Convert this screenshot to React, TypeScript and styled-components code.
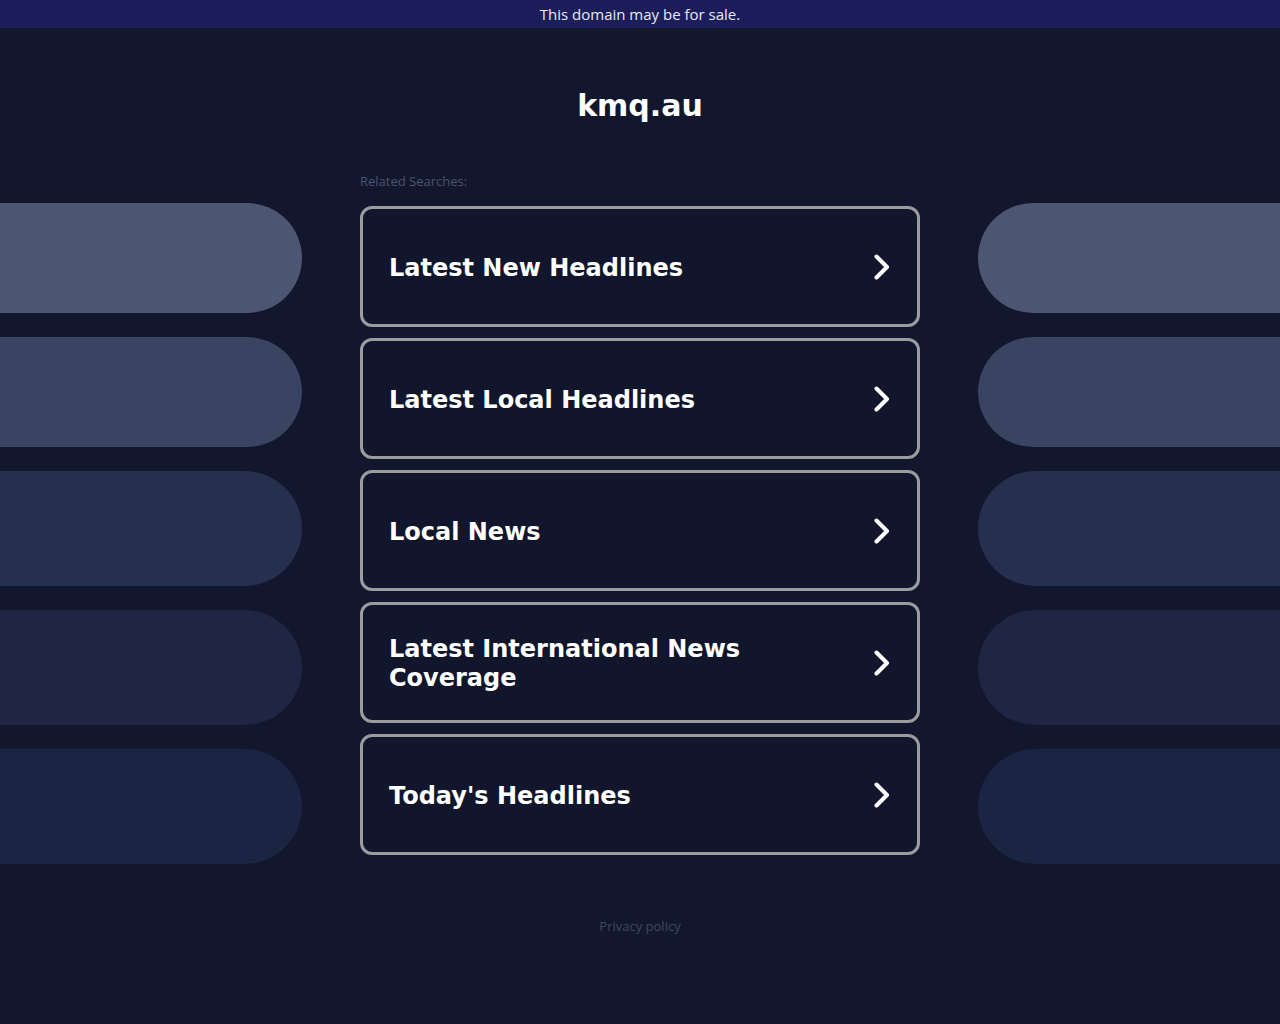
import React from 'react';
import styled, { createGlobalStyle } from 'styled-components';

const GlobalStyle = createGlobalStyle`
  html, body {
    margin: 0;
    padding: 0;
    background: #12172d;
  }
  body {
    font-family: 'Open Sans', 'Liberation Sans', sans-serif;
  }
`;

const Page = styled.div`
  width: 1280px;
  min-height: 1024px;
  display: flex;
  flex-direction: column;
  background: #12172d;
  overflow: hidden;
`;

const Banner = styled.div`
  height: 28px;
  display: flex;
  align-items: center;
  justify-content: center;
  background: #1b1e5b;
  color: #e8e9f2;
  font-size: 15px;
`;

const Title = styled.h1`
  margin: 60px 0 0;
  text-align: center;
  font-family: 'DejaVu Sans', sans-serif;
  font-weight: 700;
  font-size: 30px;
  line-height: 36px;
  color: #ffffff;
`;

const Layout = styled.div`
  margin-top: 48px;
  display: grid;
  grid-template-columns: 302px 560px 302px;
  column-gap: 58px;
  align-items: start;
`;

const PillColumn = styled.div`
  padding-top: 31px;
  display: flex;
  flex-direction: column;
  gap: 24px;
`;

const Pill = styled.div<{ $tone: string; $side: 'left' | 'right'; $h: number }>`
  height: ${({ $h }) => $h}px;
  background: ${({ $tone }) => $tone};
  border-radius: ${({ $side }) => ($side === 'left' ? '0 60px 60px 0' : '60px 0 0 60px')};
`;

const Center = styled.div`
  display: flex;
  flex-direction: column;
`;

const Label = styled.div`
  font-size: 13px;
  line-height: 18px;
  color: #4b536f;
  margin-bottom: 16px;
`;

const CardList = styled.div`
  display: flex;
  flex-direction: column;
  gap: 11px;
`;

const Card = styled.a`
  box-sizing: border-box;
  height: 121px;
  display: flex;
  align-items: center;
  gap: 40px;
  padding: 3px 27px 0 26px;
  border: 3px solid #9b9ca0;
  border-radius: 12px;
  background: #12162c;
  text-decoration: none;
  cursor: pointer;
`;

const CardText = styled.span`
  flex: 1;
  font-family: 'DejaVu Sans', sans-serif;
  font-weight: 700;
  font-size: 24px;
  line-height: 1.2;
  color: #ffffff;
`;

const Chevron = styled.svg`
  flex: none;
  display: block;
  margin-top: -2px;
`;

const Footer = styled.div`
  margin-top: 53px;
  text-align: center;
  font-size: 13px;
  line-height: 18px;
  color: #3f4763;
`;

const searches = [
  'Latest New Headlines',
  'Latest Local Headlines',
  'Local News',
  'Latest International News Coverage',
  "Today's Headlines",
];

const pills = [
  { tone: '#4c5672', h: 110 },
  { tone: '#3a4361', h: 110 },
  { tone: '#272f4e', h: 115 },
  { tone: '#1e2644', h: 115 },
  { tone: '#1c2443', h: 115 },
];

const PillStack: React.FC<{ side: 'left' | 'right' }> = ({ side }) => (
  <PillColumn>
    {pills.map((p, i) => (
      <Pill key={i} $tone={p.tone} $side={side} $h={p.h} />
    ))}
  </PillColumn>
);

const App: React.FC = () => {
  return (
    <Page>
      <GlobalStyle />
      <Banner>This domain may be for sale.</Banner>
      <Title>kmq.au</Title>
      <Layout>
        <PillStack side="left" />
        <Center>
          <Label>Related Searches:</Label>
          <CardList>
            {searches.map((s) => (
              <Card key={s}>
                <CardText>{s}</CardText>
                <Chevron width="16" height="26" viewBox="0 0 16 26">
                  <polyline
                    points="2.5,2.5 13,13 2.5,23.5"
                    fill="none"
                    stroke="#ffffff"
                    strokeWidth="4"
                    strokeLinecap="round"
                    strokeLinejoin="round"
                  />
                </Chevron>
              </Card>
            ))}
          </CardList>
        </Center>
        <PillStack side="right" />
      </Layout>
      <Footer>Privacy policy</Footer>
    </Page>
  );
};

export default App;
